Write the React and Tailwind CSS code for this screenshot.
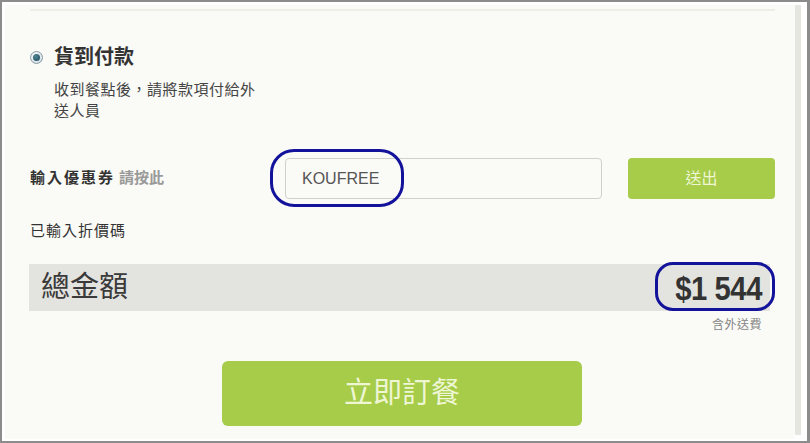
import React from 'react';

const font = "font-['Liberation_Sans','Noto_Sans_CJK_TC',sans-serif]";

const App = () => {
    return (
        <div className={`w-[810px] h-[443px] border-2 border-r-[3px] border-[#8c8c8c] bg-white pt-[3px] pl-[3px] pb-[2px] pr-[3px] flex ${font}`}>
            <div className="flex-1 bg-[#fafaf6] flex flex-col pl-[25px]">
                {/* top divider */}
                <div className="mt-[4px] h-[2px] w-[745px] bg-[#eeeee7]" />

                {/* payment option */}
                <div className="mt-[34px] flex items-center h-[24px]">
                    <span className="w-[13px] h-[13px] rounded-full border border-[#8a9aa2] bg-[radial-gradient(circle_at_40%_35%,#ffffff,#c3d6e0)] flex items-center justify-center">
                        <span className="w-[7px] h-[7px] rounded-full bg-[radial-gradient(circle_at_40%_35%,#4f8496,#1f4856)]" />
                    </span>
                    <span className="ml-[11px] text-[20px] font-bold text-[#333] leading-none">貨到付款</span>
                </div>
                <p className="mt-[10px] ml-[24px] text-[15px] leading-[21px] tracking-[0.5px] text-[#444] w-[210px]">
                    收到餐點後，請將款項付給外送人員
                </p>

                {/* coupon row */}
                <div className="mt-[37px] flex items-center h-[41px]">
                    <div className="w-[255px] text-[15px] font-bold">
                        <span className="text-[#333] tracking-[2px]">輸入優惠券</span>
                        <span className="ml-[4px] text-[#999]">請按此</span>
                    </div>
                    <div className="relative w-[317px] h-[41px]">
                        <div className="h-full rounded-[4px] border border-[#cfcfcb] bg-[#fafaf7] flex items-center pl-[16px] text-[16px] text-[#555]">
                            KOUFREE
                        </div>
                        <div className="absolute left-[-15px] top-[-9px] w-[134px] h-[58px] rounded-[24px] border-[3px] border-[#12129a]" />
                    </div>
                    <button className="ml-[26px] w-[147px] h-[41px] rounded-[4px] bg-[#a6cc4a] text-[16px] text-[#eef6d4]">
                        送出
                    </button>
                </div>

                <div className="mt-[22px] h-[20px] leading-[20px] text-[15px] tracking-[1px] text-[#333]">已輸入折價碼</div>

                {/* total */}
                <div className="relative mt-[23px] ml-[-1px] w-[741px] h-[47px] bg-[#e3e3df] flex items-center justify-between pl-[12px] pr-[8px]">
                    <span className="text-[29px] text-[#3a3a3a] leading-none">總金額</span>
                    <span className="text-[34px] font-bold text-[#333] leading-none tracking-[-0.5px] scale-x-[0.86] origin-right">$1 544</span>
                    <div className="absolute left-[626px] top-[-2px] w-[120px] h-[49px] rounded-[18px] border-[3px] border-[#12129a]" />
                </div>
                <div className="mt-[7px] w-[732px] text-right text-[12px] leading-[14px] tracking-[0.5px] text-[#888]">含外送費</div>

                <button className="mt-[29px] ml-[192px] w-[360px] h-[65px] rounded-[6px] bg-[#a6cc4a] text-[29px] text-[#eef6d4]">
                    立即訂餐
                </button>
            </div>
            <div className="w-[6px] bg-[#e6e6e1] mb-[4px]" />
            <div className="w-[3px]" />
        </div>
    );
};

export default App;
